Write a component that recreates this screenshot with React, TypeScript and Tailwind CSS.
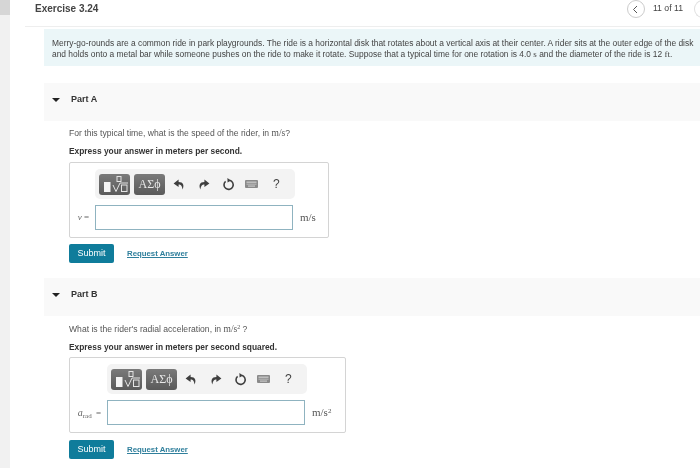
const sans = "font-['Liberation_Sans',Arial,sans-serif]";
const serif = "font-['Liberation_Serif','Times_New_Roman',serif]";

const Undo = () => (
  <svg width="12" height="11" viewBox="0 0 12 11" fill="#3f3f3f">
    <path d="M5.6 0.5 L0.6 4.4 L5.6 8 V5.6 C7.8 5.6 9 6.8 9.6 10.5 C11.4 6.4 10.4 3 5.6 3 Z" />
  </svg>
);

const Redo = () => (
  <svg width="12" height="11" viewBox="0 0 12 11" fill="#3f3f3f">
    <path d="M6.4 0.5 L11.4 4.4 L6.4 8 V5.6 C4.2 5.6 3 6.8 2.4 10.5 C0.6 6.4 1.6 3 6.4 3 Z" />
  </svg>
);

const Reset = () => (
  <svg width="13" height="13" viewBox="0 0 13 13" fill="none">
    <path d="M7.6 2.3 A4.6 4.6 0 1 1 3.6 3.3" stroke="#3f3f3f" strokeWidth="1.6" />
    <path d="M5.4 0 L9 2.4 L5.6 4.6 Z" fill="#3f3f3f" />
  </svg>
);

const Keyboard = () => (
  <svg width="13" height="8" viewBox="0 0 13 8" className="block">
    <rect width="13" height="8" rx="1" fill="#8a8a8a" />
    <rect x="1.5" y="1.5" width="10" height="1.4" fill="#c4c4c4" />
    <rect x="1.5" y="3.6" width="10" height="1.2" fill="#b4b4b4" />
    <rect x="3" y="5.5" width="7" height="1.2" fill="#c8c8c8" />
  </svg>
);

const Templates = () => (
  <div className="w-[31px] h-[21px] rounded-[3px] bg-gradient-to-b from-[#7a7a7a] to-[#5a5a5a] flex items-center justify-center">
    <svg width="27" height="17" viewBox="0 0 27 17" fill="none">
      <rect x="3" y="6" width="6.5" height="10" fill="#f4f4f4" />
      <rect x="16" y="0.5" width="4" height="5" stroke="#e4e4e4" />
      <path d="M12 9 L15 15.5 L19 7 H27" stroke="#e4e4e4" />
      <rect x="20.5" y="9" width="5.5" height="6.5" stroke="#e4e4e4" />
    </svg>
  </div>
);

const Toolbar = () => (
  <div className="w-[200px] h-[30px] rounded-[5px] bg-[#f3f3f3] flex items-center pl-[4px]">
    <Templates />
    <div className={`w-[31px] h-[21px] ml-[4px] rounded-[3px] bg-gradient-to-b from-[#7a7a7a] to-[#5a5a5a] text-[#e8e8e8] text-[12px] leading-[21px] text-center ${serif}`}>
      ΑΣϕ
    </div>
    <div className="ml-[5px] w-[18px] flex justify-center"><Undo /></div>
    <div className="ml-[7px] w-[18px] flex justify-center"><Redo /></div>
    <div className="ml-[7px] w-[16px] flex justify-center"><Reset /></div>
    <div className="ml-[8px] w-[15px] flex justify-center"><Keyboard /></div>
    <div className={`ml-[14px] text-[12px] text-[#444] ${sans}`}>?</div>
  </div>
);

type PartProps = {
  name: string;
  question: React.ReactNode;
  hint: string;
  label: React.ReactNode;
  unit: React.ReactNode;
  boxWidth: string;
  labelWidth: string;
  questionGap: string;
  boxGap: string;
  submitGap: string;
};

const Part = ({ name, question, hint, label, unit, boxWidth, labelWidth, questionGap, boxGap, submitGap }: PartProps) => (
  <section>
    <div className="h-[38px] bg-[#f9f9f9] flex items-center pl-[8px] pb-[4px]">
      <div className="w-0 h-0 border-x-[4px] border-x-transparent border-t-[4px] border-t-[#222]" />
      <span className="ml-[11px] text-[9px] font-bold text-[#333]">{name}</span>
    </div>
    <div className="pl-[25px]">
      <p className={`h-[14px] text-[8.6px] leading-[14px] text-[#555] ${questionGap}`}>{question}</p>
      <p className="mt-[4px] h-[14px] text-[8.4px] leading-[14px] font-bold text-[#333]">{hint}</p>
      <div className={`h-[76px] border border-[#d4d4d4] rounded-[2px] pt-[6px] ${boxWidth} ${boxGap}`}>
        <div className="flex">
          <div className={labelWidth} />
          <Toolbar />
        </div>
        <div className="flex items-center mt-[6px]">
          <div className={`shrink-0 pr-[6px] text-right text-[9px] text-[#666] ${serif} ${labelWidth}`}>{label}</div>
          <div className="w-[198px] h-[25px] border border-[#8fb3c0] bg-white" />
          <div className={`ml-[7px] text-[11px] text-[#555] ${serif}`}>{unit}</div>
        </div>
      </div>
      <div className={`flex items-center ${submitGap}`}>
        <button className="w-[45px] h-[19px] bg-[#0f7c9b] rounded-[2px] text-white text-[9px]">Submit</button>
        <a className="ml-[13px] text-[7.8px] font-bold text-[#2f7f9c] underline">Request Answer</a>
      </div>
    </div>
  </section>
);

export default function App() {
  return (
    <div className={`w-[700px] h-[468px] overflow-hidden bg-white flex blur-[0.4px] ${sans}`}>
      <div className="w-[10px] shrink-0 bg-[#f1f1f1]">
        <div className="h-[15px] bg-[#d6d6d6]" />
      </div>
      <main className="flex-1 min-w-0">
        <header className="h-[27px] ml-[15px] border-b border-[#eeeeee] flex items-center justify-between">
          <h1 className="ml-[10px] mb-[10px] text-[10px] font-bold text-[#444]">Exercise 3.24</h1>
          <div className="flex items-center mb-[8px] mr-[5px]">
            <div className="w-[18px] h-[18px] rounded-full border border-[#cccccc] flex items-center justify-center">
              <svg width="7" height="9" viewBox="0 0 7 9" fill="none">
                <path d="M5 1 L1.5 4.5 L5 8" stroke="#555" strokeWidth="1" />
              </svg>
            </div>
            <span className="ml-[8px] text-[8.7px] text-[#444]">11 of 11</span>
            <div className="ml-[11px] mr-[-9px] w-[10px] h-[18px] rounded-l-full border border-r-0 border-[#e0e0e0]" />
          </div>
        </header>
        <div className="ml-[34px] mt-[2px] h-[37px] bg-[#ebf6f8] pl-[8px] pt-[9px] text-[8.41px] leading-[11px] text-[#444] whitespace-nowrap">
          <p>Merry-go-rounds are a common ride in park playgrounds. The ride is a horizontal disk that rotates about a vertical axis at their center. A rider sits at the outer edge of the disk</p>
          <p>
            and holds onto a metal bar while someone pushes on the ride to make it rotate. Suppose that a typical time for one rotation is 4.0 <span className={`text-[9px] ${serif}`}>s</span> and the diameter of the ride is 12 <span className={`text-[9px] ${serif}`}>ft</span>.
          </p>
        </div>
        <div className="ml-[34px] mt-[17px] flex flex-col gap-[15px]">
          <Part
            name="Part A"
            question={<>For this typical time, what is the speed of the rider, in <span className={`text-[9.5px] ${serif}`}>m/s</span>?</>}
            hint="Express your answer in meters per second."
            label={<><i>v</i> =</>}
            unit="m/s"
            boxWidth="w-[260px]"
            labelWidth="w-[25px]"
            questionGap="mt-[5px]"
            boxGap="mt-[4px]"
            submitGap="mt-[6px]"
          />
          <Part
            name="Part B"
            question={<>What is the rider's radial acceleration, in <span className={`text-[9.5px] ${serif}`}>m/s<sup className="text-[6px]">2</sup></span> ?</>}
            hint="Express your answer in meters per second squared."
            label={<><i className="text-[10px]">a</i><sub className="text-[7px]">rad</sub> <span className="ml-[2px]">=</span></>}
            unit={<>m/s<sup className="text-[7px]">2</sup></>}
            boxWidth="w-[277px]"
            labelWidth="w-[37px]"
            questionGap="mt-[6px]"
            boxGap="mt-[3px]"
            submitGap="mt-[7px]"
          />
        </div>
      </main>
    </div>
  );
}
